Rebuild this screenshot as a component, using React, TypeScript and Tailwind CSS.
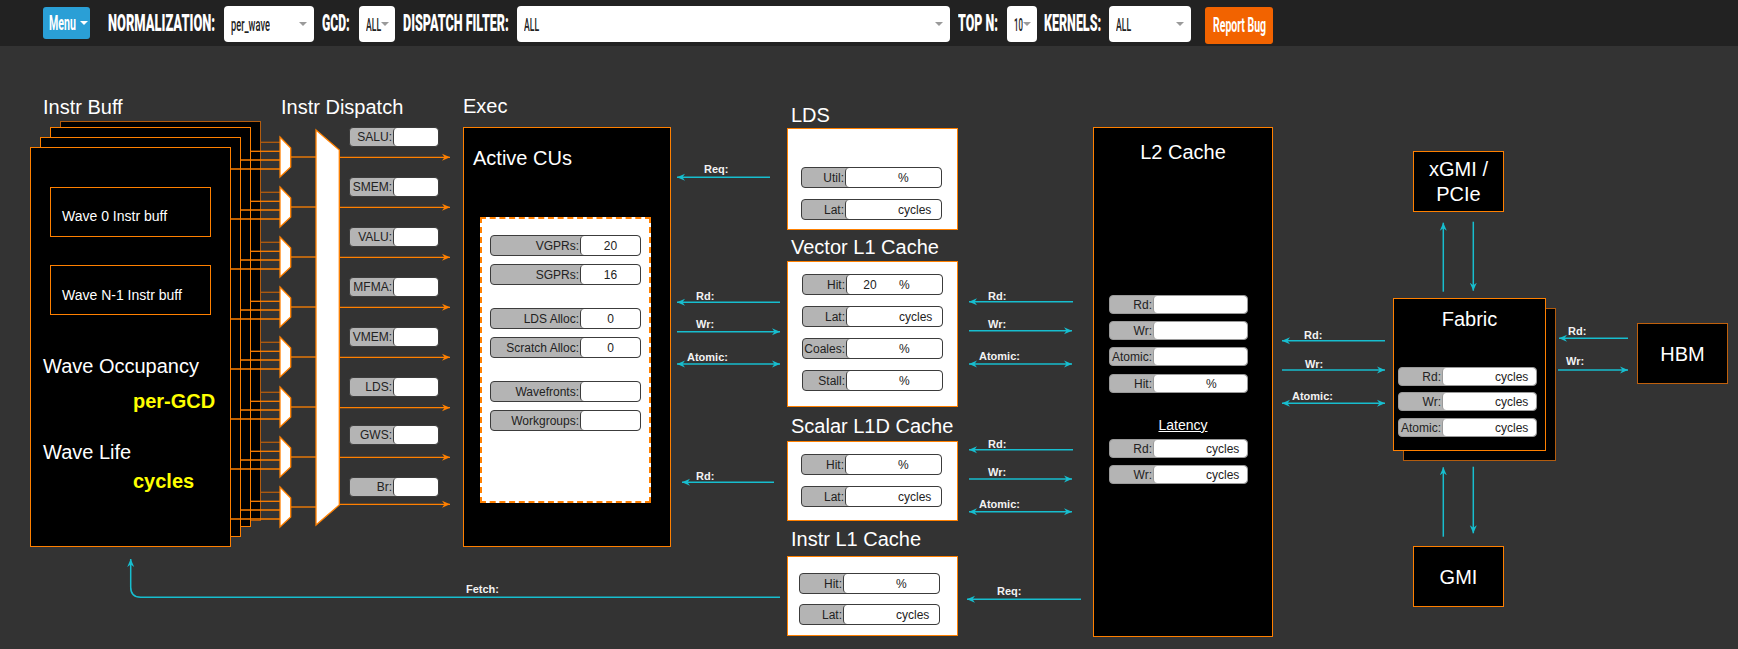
import { useLayoutEffect, useRef, useState, type ReactNode } from "react";

const TEAL = "#17becf";
const ORANGE = "#ff8000";
const BROWN = "#b35c0e";

// squeezes a line of text into the width of its box (header uses a condensed look)
function Fit({ className = "", children }: { className?: string; children: ReactNode }) {
  const box = useRef<HTMLSpanElement>(null);
  const txt = useRef<HTMLSpanElement>(null);
  const [s, setS] = useState(1);
  useLayoutEffect(() => {
    if (box.current && txt.current) setS(box.current.clientWidth / txt.current.offsetWidth);
  }, []);
  return (
    <span ref={box} className={`block whitespace-nowrap leading-none ${className}`}>
      <span ref={txt} className="inline-block origin-left" style={{ transform: `scaleX(${s})` }}>
        {children}
      </span>
    </span>
  );
}

const Caret = ({ light }: { light?: boolean }) => (
  <span
    className={`inline-block h-0 w-0 border-x-[4px] border-t-[4px] border-x-transparent ${
      light ? "border-t-white" : "border-t-[#9a9a9a]"
    }`}
  />
);

const Select = ({ className, textClass, children }: { className: string; textClass: string; children: ReactNode }) => (
  <div
    className={`mt-[2px] flex h-[36px] shrink-0 items-center justify-between rounded-[4px] bg-white px-[7px] text-[19px] font-medium text-[#222] ${className}`}
  >
    <Fit className={textClass}>{children}</Fit>
    <Caret />
  </div>
);

type FieldProps = {
  label: string;
  value?: string;
  unit?: string;
  className?: string;
  labelW: string;
  light?: boolean;
};

const Field = ({ label, value = "", unit, className = "", labelW, light }: FieldProps) => (
  <div
    className={`flex shrink-0 overflow-hidden rounded-[4px] border bg-[#b4b4b4] text-[12px] leading-none text-[#222] ${
      light ? "border-[#9a9a9a]" : "border-[#3c3c3c]"
    } ${className}`}
  >
    <div className={`flex shrink-0 items-center justify-end pr-px ${labelW}`}>{label}</div>
    <div
      className={`flex min-w-0 flex-1 items-center rounded-[4px] border-l bg-white ${
        light ? "border-[#9a9a9a]" : "border-[#3c3c3c]"
      } ${unit === undefined ? "justify-center" : ""}`}
    >
      {unit === undefined ? (
        value
      ) : (
        <>
          <span className="w-[46px] text-center">{value}</span>
          <span className="ml-[6px]">{unit}</span>
        </>
      )}
    </div>
  </div>
);

const dispatchUnits = [
  { label: "SALU:", top: "top-[81px]" },
  { label: "SMEM:", top: "top-[131px]" },
  { label: "VALU:", top: "top-[181px]" },
  { label: "MFMA:", top: "top-[231px]" },
  { label: "VMEM:", top: "top-[281px]" },
  { label: "LDS:", top: "top-[331px]" },
  { label: "GWS:", top: "top-[379px]" },
  { label: "Br:", top: "top-[431px]" },
];

const muxTops = [137, 187, 237, 287, 337, 387, 437, 487];
const outYs = [157.3, 207.3, 257.3, 307.3, 357.3, 407.7, 457.3, 504.3];
const wireX = [260.7, 250.7, 240.7, 230.7];
const wireDy = [5.3, 14.3, 23, 32];

type Arrow = { x1: number; x2: number; y: number; both?: boolean; label: string; lx: number; ly: number };

const hArrows: Arrow[] = [
  { x1: 770, x2: 677, y: 177.3, label: "Req:", lx: 704, ly: 173 },
  { x1: 780, x2: 677, y: 302.3, label: "Rd:", lx: 696, ly: 300 },
  { x1: 677, x2: 780, y: 331.7, label: "Wr:", lx: 696, ly: 328.3 },
  { x1: 677, x2: 780, y: 364, both: true, label: "Atomic:", lx: 687, ly: 361 },
  { x1: 774, x2: 682, y: 482.3, label: "Rd:", lx: 696, ly: 480 },
  { x1: 1073, x2: 969, y: 301.7, label: "Rd:", lx: 988, ly: 300 },
  { x1: 969, x2: 1072, y: 330.7, label: "Wr:", lx: 988, ly: 328.3 },
  { x1: 969, x2: 1072, y: 364, both: true, label: "Atomic:", lx: 979, ly: 360 },
  { x1: 1073, x2: 969, y: 449.7, label: "Rd:", lx: 988, ly: 447.7 },
  { x1: 969, x2: 1072, y: 479, label: "Wr:", lx: 988, ly: 476 },
  { x1: 969, x2: 1072, y: 511.7, both: true, label: "Atomic:", lx: 979, ly: 508.3 },
  { x1: 1081, x2: 967, y: 599.3, label: "Req:", lx: 997, ly: 595 },
  { x1: 1385, x2: 1282, y: 340.7, label: "Rd:", lx: 1304, ly: 339.3 },
  { x1: 1282, x2: 1385, y: 370, label: "Wr:", lx: 1305, ly: 368.3 },
  { x1: 1282, x2: 1385, y: 403.3, both: true, label: "Atomic:", lx: 1292, ly: 400 },
  { x1: 1628, x2: 1559, y: 338.3, label: "Rd:", lx: 1568, ly: 335 },
  { x1: 1558, x2: 1628, y: 370, label: "Wr:", lx: 1566, ly: 365 },
];

const vArrows = [
  [1443.3, 291.7, 222.7],
  [1473.3, 221.7, 290.7],
  [1443.3, 536.7, 467.3],
  [1473.3, 466.7, 533.3],
];

const Wires = () => (
  <svg className="pointer-events-none absolute inset-0 h-full w-full" viewBox="0 46 1738 603">
    <defs>
      <marker id="ah-teal" viewBox="0 0 8 8" refX="8" refY="4" markerWidth="8" markerHeight="8" markerUnits="userSpaceOnUse" orient="auto-start-reverse">
        <path d="M0,0.5 L8,4 L0,7.5 L2.5,4 Z" fill={TEAL} />
      </marker>
      <marker id="ah-orange" viewBox="0 0 8 8" refX="8" refY="4" markerWidth="8" markerHeight="8" markerUnits="userSpaceOnUse" orient="auto-start-reverse">
        <path d="M0,0.5 L8,4 L0,7.5 L2.5,4 Z" fill={ORANGE} />
      </marker>
    </defs>

    {/* buffer -> mux wires */}
    {muxTops.map((t) =>
      wireDy.map((dy, k) => (
        <line key={`${t}-${k}`} x1={wireX[k]} x2={280} y1={t + dy} y2={t + dy} stroke={k === 0 ? BROWN : ORANGE} strokeWidth={1.3} />
      ))
    )}
    {muxTops.map((t) => (
      <g key={t}>
        <line x1={290.7} x2={316} y1={t + 20} y2={t + 20} stroke={ORANGE} strokeWidth={1.3} />
        <polygon points={`280,${t} 290.7,${t + 11} 290.7,${t + 30} 280,${t + 40}`} fill="#fff" stroke={ORANGE} strokeWidth={1.3} />
      </g>
    ))}
    <polygon points="316,130 339.3,150 339.3,505 316,525" fill="#fff" stroke={ORANGE} strokeWidth={1.3} />
    {outYs.map((y) => (
      <line key={y} x1={339.3} x2={450} y1={y} y2={y} stroke={ORANGE} strokeWidth={1.3} markerEnd="url(#ah-orange)" />
    ))}

    {/* memory traffic */}
    <g fontFamily="'Liberation Sans', Arial, sans-serif" fontWeight="bold" fontSize={11} fill="#f2f2f2">
      {hArrows.map((a) => (
        <g key={`${a.x1}-${a.y}`}>
          <line
            x1={a.x1}
            x2={a.x2}
            y1={a.y}
            y2={a.y}
            stroke={TEAL}
            strokeWidth={1.5}
            markerEnd="url(#ah-teal)"
            markerStart={a.both ? "url(#ah-teal)" : undefined}
          />
          <text x={a.lx} y={a.ly}>
            {a.label}
          </text>
        </g>
      ))}
      <path d="M780,597.3 H140.7 Q130.7,597.3 130.7,587.3 V559" fill="none" stroke={TEAL} strokeWidth={1.5} markerEnd="url(#ah-teal)" />
      <text x={466} y={592.7}>
        Fetch:
      </text>
    </g>
    {vArrows.map(([x, y1, y2]) => (
      <line key={`${x}-${y1}`} x1={x} x2={x} y1={y1} y2={y2} stroke={TEAL} strokeWidth={1.5} markerEnd="url(#ah-teal)" />
    ))}
  </svg>
);

export default function App() {
  return (
    <div className="min-h-screen bg-[#333] font-['Liberation_Sans',Arial,sans-serif]">
      <header className="flex h-[46px] items-center bg-[#222] font-['Roboto',sans-serif] font-black text-white">
        <button className="ml-[43px] flex h-[32px] w-[47px] shrink-0 items-center rounded-[3px] bg-[#2a9fd6] pl-[6px] text-[20px] font-bold">
          <Fit className="w-[27px]">Menu</Fit>
          <span className="ml-[4px] flex">
            <Caret light />
          </span>
        </button>
        <Fit className="ml-[18px] w-[107px] text-[23px]">NORMALIZATION:</Fit>
        <Select className="ml-[9px] w-[90px]" textClass="w-[39px]">per_wave</Select>
        <Fit className="ml-[8px] w-[28px] text-[23px]">GCD:</Fit>
        <Select className="ml-[9px] w-[36px]" textClass="w-[15px]">ALL</Select>
        <Fit className="ml-[8px] w-[106px] text-[23px]">DISPATCH FILTER:</Fit>
        <Select className="ml-[8px] w-[433px]" textClass="w-[15px]">ALL</Select>
        <Fit className="ml-[8px] w-[40px] text-[23px]">TOP N:</Fit>
        <Select className="ml-[9px] w-[30px]" textClass="w-[9px]">10</Select>
        <Fit className="ml-[7px] w-[57px] text-[23px]">KERNELS:</Fit>
        <Select className="ml-[8px] w-[82px]" textClass="w-[15px]">ALL</Select>
        <button className="ml-[14px] mt-[4px] flex h-[37px] w-[68px] shrink-0 items-center justify-center rounded-[3px] bg-[#f26300] text-[20px] font-bold">
          <Fit className="w-[53px]">Report Bug</Fit>
        </button>
      </header>

      <div className="relative h-[603px] text-white">
        {/* instruction buffers, stacked per wave */}
        <p className="absolute left-[43px] top-[51px] text-[20px] leading-none">Instr Buff</p>
        <div className="absolute left-[60px] top-[75px] h-[400px] w-[201px] border border-[#b35c0e] bg-black" />
        <div className="absolute left-[50px] top-[81px] h-[400px] w-[201px] border border-[#ff8000] bg-black" />
        <div className="absolute left-[40px] top-[91px] h-[400px] w-[201px] border border-[#ff8000] bg-black" />
        <div className="absolute left-[30px] top-[101px] flex h-[400px] w-[201px] flex-col items-start border border-[#ff8000] bg-black pt-[39px]">
          <div className="ml-[19px] h-[50px] w-[161px] border border-[#ff8000] pl-[11px] pt-[21px] text-[14px] leading-none">
            Wave 0 Instr buff
          </div>
          <div className="ml-[19px] mt-[28px] h-[50px] w-[161px] border border-[#ff8000] pl-[11px] pt-[22px] text-[14px] leading-none">
            Wave N-1 Instr buff
          </div>
          <p className="ml-[12px] mt-[41px] text-[20px] leading-none">Wave Occupancy</p>
          <p className="ml-[102px] mt-[15px] text-[20px] font-bold leading-none text-[#ffff00]">per-GCD</p>
          <p className="ml-[12px] mt-[31px] text-[20px] leading-none">Wave Life</p>
          <p className="ml-[102px] mt-[9px] text-[20px] font-bold leading-none text-[#ffff00]">cycles</p>
        </div>

        {/* dispatch */}
        <p className="absolute left-[281px] top-[51px] text-[20px] leading-none">Instr Dispatch</p>
        {dispatchUnits.map((u) => (
          <Field key={u.label} label={u.label} labelW="w-[43px]" className={`absolute left-[349px] h-[20px] w-[90px] ${u.top}`} />
        ))}

        {/* exec */}
        <p className="absolute left-[463px] top-[50px] text-[20px] leading-none">Exec</p>
        <div className="absolute left-[463px] top-[81px] flex h-[420px] w-[208px] flex-col items-start border border-[#ff8000] bg-black pl-[9px] pt-[20px]">
          <p className="text-[20px] leading-none">Active CUs</p>
          <div className="ml-[7px] mt-[49px] flex h-[286px] w-[171px] flex-col border-2 border-dashed border-[#ff8000] bg-white pl-[8px] pt-[16px]">
            <Field label="VGPRs:" value="20" labelW="w-[89px]" className="h-[21px] w-[151px]" />
            <Field label="SGPRs:" value="16" labelW="w-[89px]" className="mt-[8px] h-[21px] w-[151px]" />
            <Field label="LDS Alloc:" value="0" labelW="w-[89px]" className="mt-[23px] h-[21px] w-[151px]" />
            <Field label="Scratch Alloc:" value="0" labelW="w-[89px]" className="mt-[8px] h-[21px] w-[151px]" />
            <Field label="Wavefronts:" labelW="w-[89px]" className="mt-[23px] h-[21px] w-[151px]" />
            <Field label="Workgroups:" labelW="w-[89px]" className="mt-[8px] h-[21px] w-[151px]" />
          </div>
        </div>

        {/* LDS and L1 caches */}
        <div className="absolute left-[787px] top-[59px] flex w-[171px] flex-col">
          <p className="ml-[4px] text-[20px] leading-none">LDS</p>
          <div className="mt-[3px] flex h-[102px] flex-col border border-[#ff8000] bg-white pl-[13px] pt-[38px]">
            <Field label="Util:" unit="%" labelW="w-[43px]" className="h-[21px] w-[141px]" />
            <Field label="Lat:" unit="cycles" labelW="w-[43px]" className="mt-[11px] h-[21px] w-[141px]" />
          </div>
          <p className="ml-[4px] mt-[7px] text-[20px] leading-none">Vector L1 Cache</p>
          <div className="mt-[4px] flex h-[146px] flex-col gap-[11px] border border-[#ff8000] bg-white pl-[14px] pt-[12px]">
            <Field label="Hit:" value="20" unit="%" labelW="w-[43px]" className="h-[21px] w-[141px]" />
            <Field label="Lat:" unit="cycles" labelW="w-[43px]" className="h-[21px] w-[141px]" />
            <Field label="Coales:" unit="%" labelW="w-[43px]" className="h-[21px] w-[141px]" />
            <Field label="Stall:" unit="%" labelW="w-[43px]" className="h-[21px] w-[141px]" />
          </div>
          <p className="ml-[4px] mt-[9px] text-[20px] leading-none">Scalar L1D Cache</p>
          <div className="mt-[5px] flex h-[80px] flex-col gap-[11px] border border-[#ff8000] bg-white pl-[13px] pt-[12px]">
            <Field label="Hit:" unit="%" labelW="w-[43px]" className="h-[21px] w-[141px]" />
            <Field label="Lat:" unit="cycles" labelW="w-[43px]" className="h-[21px] w-[141px]" />
          </div>
          <p className="ml-[4px] mt-[8px] text-[20px] leading-none">Instr L1 Cache</p>
          <div className="mt-[7px] flex h-[80px] flex-col gap-[10px] border border-[#ff8000] bg-white pl-[11px] pt-[16px]">
            <Field label="Hit:" unit="%" labelW="w-[43px]" className="h-[21px] w-[141px]" />
            <Field label="Lat:" unit="cycles" labelW="w-[43px]" className="h-[21px] w-[141px]" />
          </div>
        </div>

        {/* L2 */}
        <div className="absolute left-[1093px] top-[81px] flex h-[510px] w-[180px] flex-col items-start border border-[#ff8000] bg-black pt-[14px]">
          <p className="self-center text-[20px] leading-none">L2 Cache</p>
          <Field light label="Rd:" labelW="w-[43px]" className="ml-[15px] mt-[133px] h-[19px] w-[139px]" />
          <Field light label="Wr:" labelW="w-[43px]" className="ml-[15px] mt-[7px] h-[19px] w-[139px]" />
          <Field light label="Atomic:" labelW="w-[43px]" className="ml-[15px] mt-[7px] h-[19px] w-[139px]" />
          <Field light label="Hit:" unit="%" labelW="w-[43px]" className="ml-[15px] mt-[8px] h-[19px] w-[139px]" />
          <p className="mt-[25px] self-center text-[14px] leading-none underline">Latency</p>
          <Field light label="Rd:" unit="cycles" labelW="w-[43px]" className="ml-[15px] mt-[7px] h-[19px] w-[139px]" />
          <Field light label="Wr:" unit="cycles" labelW="w-[43px]" className="ml-[15px] mt-[7px] h-[19px] w-[139px]" />
        </div>

        {/* fabric and off-chip */}
        <div className="absolute left-[1413px] top-[105px] flex h-[61px] w-[91px] items-center justify-center border border-[#ff8000] bg-black text-center text-[20px] leading-[25px]">
          xGMI /<br />
          PCIe
        </div>
        <div className="absolute left-[1403px] top-[262px] h-[153px] w-[153px] border border-[#b35c0e] bg-black" />
        <div className="absolute left-[1393px] top-[252px] flex h-[153px] w-[153px] flex-col items-start border border-[#ff8000] bg-black pt-[10px]">
          <p className="self-center text-[20px] leading-none">Fabric</p>
          <Field light label="Rd:" unit="cycles" labelW="w-[43px]" className="ml-[4px] mt-[38px] h-[19px] w-[139px]" />
          <Field light label="Wr:" unit="cycles" labelW="w-[43px]" className="ml-[4px] mt-[6px] h-[19px] w-[139px]" />
          <Field light label="Atomic:" unit="cycles" labelW="w-[43px]" className="ml-[4px] mt-[7px] h-[19px] w-[139px]" />
        </div>
        <div className="absolute left-[1413px] top-[500px] flex h-[61px] w-[91px] items-center justify-center border border-[#ff8000] bg-black text-[20px]">
          GMI
        </div>
        <div className="absolute left-[1637px] top-[277px] flex h-[61px] w-[91px] items-center justify-center border border-[#c0600c] bg-black text-[20px]">
          HBM
        </div>

        <Wires />
      </div>
    </div>
  );
}
